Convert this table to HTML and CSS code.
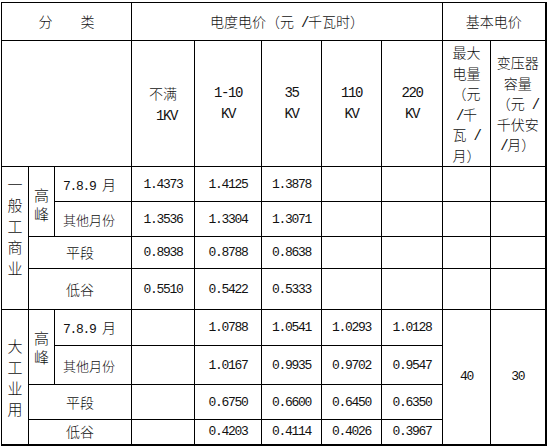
FILE: index.html
```html
<!DOCTYPE html>
<html lang="zh">
<head>
<meta charset="utf-8">
<title>电价表</title>
<link rel="stylesheet" href="styles.css">
</head>
<body>
<table class="tariff">
  <colgroup>
    <col class="c-a"><col class="c-b"><col class="c-c"><col class="c-d"><col class="c-e">
    <col class="c-f"><col class="c-g"><col class="c-h"><col class="c-i"><col class="c-j">
  </colgroup>
  <tr class="r1">
    <th colspan="3">分　　类</th>
    <th colspan="5">电度电价（元<span class="lat-h"> /</span>千瓦时）</th>
    <th colspan="2">基本电价</th>
  </tr>
  <tr class="r2">
    <td colspan="3"></td>
    <td>不满<br><span class="lat-h">&nbsp;1KV</span></td>
    <td class="lat-c">1-10<br>KV</td>
    <td class="lat-c">35<br>KV</td>
    <td class="lat-c">110<br>KV</td>
    <td class="lat-c">220<br>KV</td>
    <td class="unit">最大<br>电量<br>（元<br><span class="lat-h">/</span>千<br>瓦<span class="lat-h"> /</span><br>月）</td>
    <td class="unit">变压器<br>容量<br>（元<span class="lat-h"> /</span><br>千伏安<br><span class="lat-h">/</span>月）</td>
  </tr>
  <tr class="r3">
    <td rowspan="4" class="vert vert-a">一般工商业</td>
    <td rowspan="2" class="peak peak-a">高峰</td>
    <td class="mon"><span class="num-s">7.8.9 </span>月</td>
    <td class="num">1.4373</td><td class="num">1.4125</td><td class="num">1.3878</td>
    <td></td><td></td><td></td><td></td>
  </tr>
  <tr class="r4">
    <td class="mon other">其他月份</td>
    <td class="num">1.3536</td><td class="num">1.3304</td><td class="num">1.3071</td>
    <td></td><td></td><td></td><td></td>
  </tr>
  <tr class="r5">
    <td colspan="2" class="seg">平段</td>
    <td class="num">0.8938</td><td class="num">0.8788</td><td class="num">0.8638</td>
    <td></td><td></td><td></td><td></td>
  </tr>
  <tr class="r6">
    <td colspan="2" class="seg">低谷</td>
    <td class="num">0.5510</td><td class="num">0.5422</td><td class="num">0.5333</td>
    <td></td><td></td><td></td><td></td>
  </tr>
  <tr class="r7">
    <td rowspan="4" class="vert">大工业用</td>
    <td rowspan="2" class="peak">高峰</td>
    <td class="mon"><span class="num-s">7.8.9 </span>月</td>
    <td></td>
    <td class="num">1.0788</td><td class="num">1.0541</td><td class="num">1.0293</td><td class="num">1.0128</td>
    <td rowspan="4" class="num">40</td>
    <td rowspan="4" class="num">30</td>
  </tr>
  <tr class="r8">
    <td class="mon other">其他月份</td>
    <td></td>
    <td class="num">1.0167</td><td class="num">0.9935</td><td class="num">0.9702</td><td class="num">0.9547</td>
  </tr>
  <tr class="r9">
    <td colspan="2" class="seg">平段</td>
    <td></td>
    <td class="num">0.6750</td><td class="num">0.6600</td><td class="num">0.6450</td><td class="num">0.6350</td>
  </tr>
  <tr class="r10">
    <td colspan="2" class="seg">低谷</td>
    <td></td>
    <td class="num">0.4203</td><td class="num">0.4114</td><td class="num">0.4026</td><td class="num">0.3967</td>
  </tr>
</table>
</body>
</html>
```
FILE: styles.css
```css
html, body {
  margin: 0;
  padding: 0;
  background: #fff;
}

.tariff {
  border-collapse: collapse;
  table-layout: fixed;
  width: 545px;
  margin: 2px 0 0 1px;
  font-family: "Noto Sans CJK SC", "Noto Sans CJK JP", sans-serif;
  font-size: 14px;
  color: #111;
  border-right: 2px solid #000;
  border-bottom: 2px solid #000;
}

.tariff th,
.tariff td {
  border: 1px solid #000;
  padding: 0;
  text-align: center;
  vertical-align: middle;
  font-weight: 300;
  line-height: 21px;
  overflow: hidden;
}

.c-a { width: 27px; }
.c-b { width: 26px; }
.c-c { width: 77px; }
.c-d { width: 63px; }
.c-e { width: 67px; }
.c-f { width: 60px; }
.c-g { width: 60px; }
.c-h { width: 61px; }
.c-i { width: 48px; }
.c-j { width: 55px; }

.r1 { height: 38px; }
.r2 { height: 126px; }
.r3 { height: 35px; }
.r4 { height: 35px; }
.r5 { height: 32px; }
.r6 { height: 41px; }
.r7 { height: 36px; }
.r8 { height: 39px; }
.r9 { height: 35px; }
.r10 { height: 25px; }

.lat-h {
  font-family: "Liberation Mono", monospace;
  font-size: 14px;
  letter-spacing: -1.4px;
  line-height: 1;
}

.tariff td.lat-c {
  font-family: "Liberation Mono", monospace;
  font-size: 14px;
  letter-spacing: -1.4px;
}

.tariff td.num {
  font-family: "Liberation Mono", monospace;
  font-size: 13px;
  letter-spacing: -1.3px;
}

.num-s {
  font-family: "Liberation Mono", monospace;
  font-size: 13px;
  letter-spacing: -1.3px;
  line-height: 1;
}

.tariff td.unit {
  line-height: 20.5px;
}

.tariff td.vert {
  font-size: 15px;
  line-height: 21px;
}

.tariff td.vert-a {
  padding-bottom: 25px;
}

.tariff td.peak {
  font-size: 15px;
  line-height: 19px;
}

.tariff td.peak-a {
  padding-top: 4px;
}

.tariff td.mon {
  text-align: left;
  padding-left: 8px;
  font-size: 14px;
}

.tariff td.other {
  font-size: 13px;
}

.tariff td.seg {
  font-size: 14px;
}
```
